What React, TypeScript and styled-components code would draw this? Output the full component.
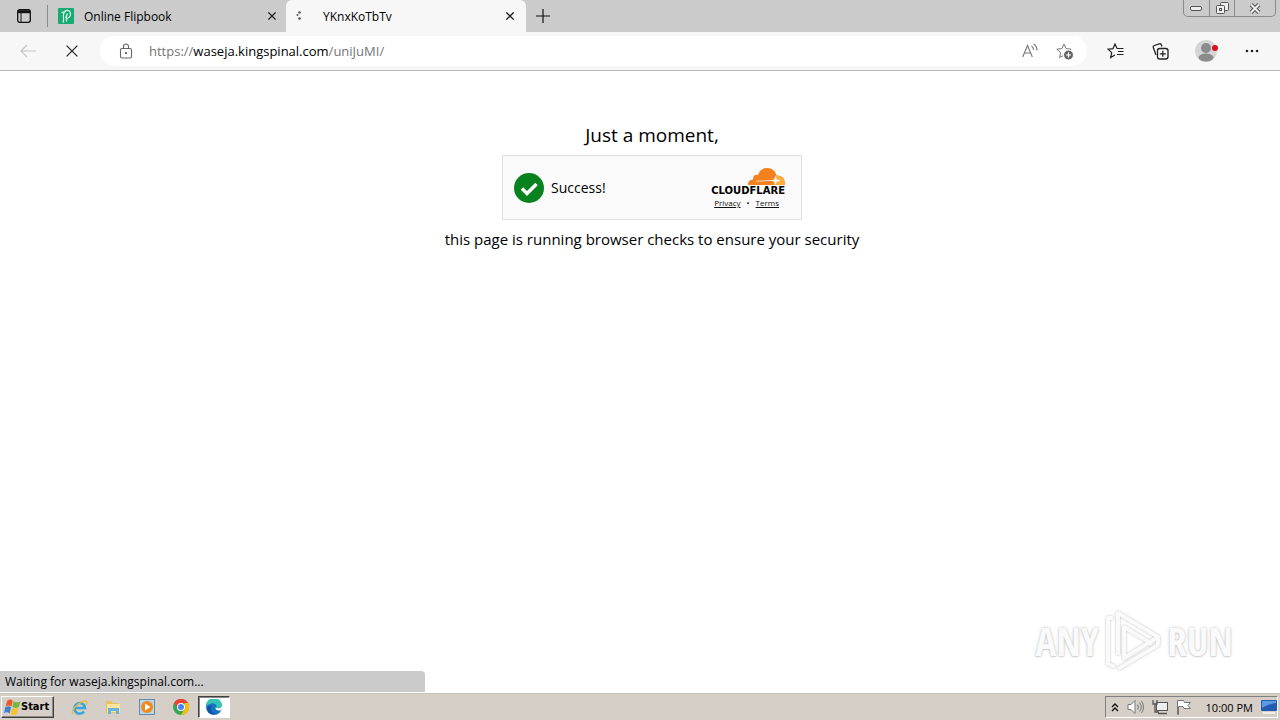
import React from 'react';
import styled, { createGlobalStyle } from 'styled-components';

const Global = createGlobalStyle`
  * { box-sizing: border-box; }
  body { margin: 0; background: #fff; color: #000; font-family: "Open Sans", "Noto Sans", sans-serif; }
  button { font: inherit; color: inherit; background: none; border: 0; padding: 0; margin: 0; }
  svg { display: block; flex: none; }
`;

const Screen = styled.div`
  min-height: 100vh;
  display: flex;
  flex-direction: column;
`;

const TabStrip = styled.header`
  display: flex;
  height: 32px;
  background: #cbcbcb;
`;

const IconButton = styled.button<{ $w?: number }>`
  display: flex;
  align-items: center;
  justify-content: center;
  width: ${(p) => p.$w ?? 32}px;
  height: 32px;
  flex: none;
`;

const Tab = styled.div<{ $active?: boolean }>`
  display: flex;
  align-items: center;
  width: ${(p) => (p.$active ? 240 : 239)}px;
  padding: 0 0 0 10px;
  font-size: 12px;
  background: ${(p) => (p.$active ? '#f7f7f7' : 'transparent')};
  border-radius: ${(p) => (p.$active ? '6px 6px 0 0' : '0')};
  border-left: ${(p) => (p.$active ? '0' : '1px solid #8a8a8a')};
  border-image: linear-gradient(#0000 6px, #8a8a8a 6px 26px, #0000 26px) 1;
  border-image-width: ${(p) => (p.$active ? 0 : '0 0 0 1px')};
`;

const TabTitle = styled.span<{ $gap: number }>`
  flex: 1;
  margin-left: ${(p) => p.$gap}px;
  white-space: nowrap;
`;

const WindowControls = styled.div`
  display: flex;
  margin: 0 4px 0 auto;
  height: 17px;
  border: 1px solid #8a8a8a;
  border-top: 0;
  border-radius: 0 0 5px 5px;
`;

const WindowButton = styled.button<{ $w: number }>`
  display: flex;
  align-items: center;
  justify-content: center;
  width: ${(p) => p.$w}px;
  & + & { border-left: 1px solid #8a8a8a; }
`;

const Toolbar = styled.nav`
  display: flex;
  align-items: center;
  height: 39px;
  padding: 0 12px;
  background: #f7f7f7;
  border-bottom: 1px solid #b9b9b9;
`;

const AddressBar = styled.div`
  display: flex;
  align-items: center;
  flex: 1;
  height: 30px;
  margin: 0 12px 0 0;
  padding: 0 5px 0 18px;
  border-radius: 15px;
  background: #fff;
`;

const Address = styled.div`
  flex: 1;
  margin-left: 15px;
  font-size: 13px;
  color: #757575;
  b { font-weight: 400; color: #000; }
`;

const Actions = styled.div`
  display: flex;
  gap: 13px;
`;

const Content = styled.main`
  position: relative;
  flex: 1;
  display: flex;
  flex-direction: column;
  align-items: center;
  padding: 52px 0 0 24px;
`;

const Heading = styled.h1`
  margin: 0;
  font-size: 19px;
  line-height: 24px;
  font-weight: 400;
`;

const Widget = styled.section`
  display: flex;
  align-items: center;
  width: 300px;
  height: 65px;
  margin: 8px 0;
  padding: 0 16px 0 11px;
  background: #fafafa;
  border: 1px solid #e0e0e0;
`;

const Success = styled.span`
  flex: 1;
  margin-left: 7px;
  font-size: 14px;
`;

const Brand = styled.div`
  display: flex;
  flex-direction: column;
  align-items: flex-end;
  padding-top: 2px;
`;

const BrandName = styled.span`
  font: bold 10px/12px "DejaVu Sans", sans-serif;
`;

const BrandLinks = styled.div`
  display: flex;
  align-items: center;
  gap: 6px;
  margin-right: 6px;
  font-size: 8px;
  line-height: 12px;
  a { color: #111; }
`;

const Note = styled.p`
  margin: 0;
  font-size: 15px;
  line-height: 22px;
`;

const StatusBubble = styled.div`
  position: absolute;
  left: 0;
  bottom: 1px;
  width: 425px;
  max-width: 100%;
  height: 21px;
  padding-left: 5px;
  font-size: 12px;
  line-height: 21px;
  background: #cbcbcb;
  border-radius: 0 4px 0 0;
`;

const Watermark = styled.div`
  position: absolute;
  right: 47px;
  bottom: 20px;
  display: flex;
  align-items: center;
  gap: 5px;
  font: 39px/60px "Open Sans Condensed", Roboto, sans-serif;
  color: #fafafa;
  text-shadow: 0 0 3px #bbb, 0 1px 1px #ddd;
  svg { filter: drop-shadow(0 0 1px #bbb); }
`;

const Taskbar = styled.footer`
  display: flex;
  align-items: center;
  height: 27px;
  background: #d6cfc7;
  border-top: 1px solid #c5c1b9;
`;

const StartButton = styled.button`
  display: flex;
  align-items: center;
  gap: 0;
  height: 22px;
  width: 53px;
  margin: 0 8px 0 1px;
  padding-left: 2px;
  font: bold 11px/20px "DejaVu Sans Condensed", "DejaVu Sans", sans-serif;
  border: 1px solid;
  border-color: #fff #404040 #404040 #fff;
  box-shadow: inset -1px -1px #8c8880;
`;

const TaskButton = styled.button<{ $pressed?: boolean }>`
  display: flex;
  align-items: center;
  justify-content: center;
  width: ${(p) => (p.$pressed ? 32 : 34)}px;
  height: 22px;
  background: ${(p) => (p.$pressed ? '#fff' : 'transparent')};
  border: ${(p) => (p.$pressed ? '1px solid' : '0')};
  border-color: #404040 #fff #fff #404040;
  box-shadow: ${(p) => (p.$pressed ? 'inset 1px 1px #888' : 'none')};
`;

const Tray = styled.div`
  display: flex;
  align-items: center;
  gap: 8px;
  height: 22px;
  margin: 0 2px 0 auto;
  padding: 0 0 0 5px;
  border: 1px solid;
  border-color: #808080 #fff #fff #808080;
`;

const Clock = styled.time`
  margin: 0 0 0 6px;
  font-size: 11px;
  white-space: nowrap;
`;

const Close = ({ size = 8, stroke = 1.6 }: { size?: number; stroke?: number }) => (
  <svg width={size} height={size} viewBox="0 0 10 10" stroke="#222" strokeWidth={stroke} fill="none">
    <path d="M.5.5l9 9M9.5.5l-9 9" />
  </svg>
);

const star = 'M8 1l2.1 4.6 5 .6-3.7 3.4 1 5L8 12.1l-4.4 2.5 1-5L.9 6.2l5-.6z';

export default function App() {
  return (
    <Screen>
      <Global />
      <TabStrip>
        <IconButton $w={47} aria-label="Tab actions">
          <svg width="14" height="14" viewBox="0 0 14 14" fill="none" stroke="#111">
            <rect x=".7" y=".7" width="12.6" height="12.6" rx="2" strokeWidth="1.3" />
            <path d="M1 2.700h12" strokeWidth="3" /><path d="M4 4v9" />
          </svg>
        </IconButton>
        <Tab>
          <svg width="16" height="16" viewBox="0 0 16 16" fill="none">
            <rect width="16" height="16" rx="1" fill="#18ab72" />
            <path d="M5 14.500C6.500 12 5 9 5.500 6.500 6 3.500 8 2.200 10 2.500c2.500.5 3 3.500 2 5.500-.8 1.500-2.200 2.500-3.500 2.500v3M8.500 10.500C7.500 9 8.500 7 9.500 5.500M3.500 4.500L6 4" stroke="#e6fff4" strokeWidth="1.200" />
          </svg>
          <TabTitle $gap={10}>Online Flipbook</TabTitle>
          <IconButton $w={29} aria-label="Close Online Flipbook"><Close /></IconButton>
        </Tab>
        <Tab $active>
          <svg width="6" height="10" viewBox="0 0 6 10" fill="#555">
            <circle cx="3.500" cy="1.500" r="1.300" /><circle cx="1.500" cy="4" r="1" /><circle cx="3.500" cy="7.500" r="1.300" />
          </svg>
          <TabTitle $gap={21}>YKnxKoTbTv</TabTitle>
          <IconButton aria-label="Close YKnxKoTbTv"><Close /></IconButton>
        </Tab>
        <IconButton $w={34} aria-label="New tab">
          <svg width="14" height="14" viewBox="0 0 14 14" stroke="#111" strokeWidth="1.200"><path d="M7 0v14M0 7h14" /></svg>
        </IconButton>
        <WindowControls>
          <WindowButton $w={25} aria-label="Minimize">
            <svg width="13" height="5" viewBox="0 0 13 5"><rect x=".5" y=".5" width="11" height="4" rx="1.500" fill="#eee" stroke="#555" /></svg>
          </WindowButton>
          <WindowButton $w={25} aria-label="Restore">
            <svg width="13" height="12" viewBox="0 0 13 12" fill="#eee" stroke="#555">
              <rect x="4.500" y=".5" width="8" height="8" rx="1" /><rect x=".5" y="3.500" width="8" height="8" rx="1" /><rect x="3.500" y="6.500" width="2" height="2" />
            </svg>
          </WindowButton>
          <WindowButton $w={41} aria-label="Close">
            <svg width="12" height="11" viewBox="0 0 12 11" fill="none">
              <path d="M2 1.500l8 8M10 1.500l-8 8" stroke="#555" strokeWidth="4" /><path d="M2 1.500l8 8M10 1.500l-8 8" stroke="#eee" strokeWidth="2" />
            </svg>
          </WindowButton>
        </WindowControls>
      </TabStrip>
      <Toolbar>
        <IconButton aria-label="Back">
          <svg width="16" height="14" viewBox="0 0 16 14" fill="none" stroke="#c4c4c4" strokeWidth="1.200"><path d="M7 1L1 7l6 6M1 7h15" /></svg>
        </IconButton>
        <IconButton $w={56} aria-label="Stop loading"><Close size={12} stroke={1} /></IconButton>
        <AddressBar>
          <svg width="16" height="16" viewBox="0 0 16 16" fill="none" stroke="#666" strokeWidth="1.100">
            <rect x="2.500" y="5.500" width="11" height="9.500" rx="1.500" /><path d="M5.500 5.500V3.500a2.500 2.500 0 015 0v2" /><circle cx="8" cy="10.200" r=".6" fill="#666" />
          </svg>
          <Address>https://<b>waseja.kingspinal.com</b>/uniJuMI/</Address>
          <IconButton $w={36} aria-label="Read aloud">
            <svg width="16" height="16" viewBox="0 0 16 16" fill="none" stroke="#777" strokeWidth="1.100">
              <path d="M.7 14L5.500 2.500 10.300 14M2.400 10h6.200M9.500 3q2 1.200 2 4M11.500 1q3.500 2 3.500 6.500" />
            </svg>
          </IconButton>
          <IconButton $w={34} aria-label="Add to favorites">
            <svg width="18" height="17" viewBox="0 0 18 17" fill="none" stroke="#777">
              <path d={star} /><circle cx="12.500" cy="12" r="5" fill="#666" stroke="#fff" /><path d="M12.500 9.500v5M10 12h5" stroke="#fff" strokeWidth="1.200" />
            </svg>
          </IconButton>
        </AddressBar>
        <Actions>
          <IconButton aria-label="Favorites">
            <svg width="17" height="16" viewBox="0 0 17 16" fill="none" stroke="#222" strokeWidth="1.200">
              <path d="M10 5.500L8 1 6 5.600l-5 .6 3.700 3.400-1 5L8 12.100M10 5.500h6.500M11 8.500h5.500M10 11.500h6.500" />
            </svg>
          </IconButton>
          <IconButton aria-label="Collections">
            <svg width="17" height="17" viewBox="0 0 17 17" fill="none" stroke="#222" strokeWidth="1.300">
              <path d="M4 12L1.300 4.500q-.4-1.400 1-2l5-1.700q1.400-.4 2 1l.7 1.700" /><rect x="5.500" y="5.500" width="10.500" height="10.500" rx="2.200" /><path d="M10.800 7.800v6M7.800 10.800h6" />
            </svg>
          </IconButton>
          <IconButton $w={34} aria-label="Profile">
            <svg width="24" height="22" viewBox="0 0 24 22">
              <circle cx="12" cy="11" r="11" fill="#d5d5d5" /><circle cx="12" cy="8" r="5" fill="#8b8b8b" /><ellipse cx="12" cy="17.500" rx="7.500" ry="4" fill="#8b8b8b" /><circle cx="21" cy="8" r="3" fill="#d8101c" />
            </svg>
          </IconButton>
          <IconButton aria-label="Settings">
            <svg width="14" height="4" viewBox="0 0 14 4" fill="#222"><circle cx="2" cy="2" r="1.300" /><circle cx="7" cy="2" r="1.300" /><circle cx="12" cy="2" r="1.300" /></svg>
          </IconButton>
        </Actions>
      </Toolbar>
      <Content>
        <Heading>Just a moment,</Heading>
        <Widget>
          <svg width="30" height="30" viewBox="0 0 30 30"><circle cx="15" cy="15" r="15" fill="#07821f" /><path d="M8 15.500l5 5 9.500-9.500" fill="none" stroke="#fff" strokeWidth="3.500" /></svg>
          <Success>Success!</Success>
          <Brand>
            <svg width="37" height="17" viewBox="0 0 37 17">
              <path d="M0 17q-.5-5 5-5.500Q5 6 10 7 12 0 19 0q8 0 9.500 7.500Q36 7 37 14.500V17z" fill="#f48120" />
              <path d="M28 8q6-1 8 4 1 2 1 5H25z" fill="#faad3f" />
              <path d="M8 13.300l18-1M27.500 8.500l.8 3.200 3.700.9-3.700.9-.8 2.800-.8-2.800-2.700-.9 2.700-.9z" stroke="#fff" strokeWidth=".7" fill="#fff" />
            </svg>
            <BrandName>CLOUDFLARE</BrandName>
            <BrandLinks><a href="#privacy">Privacy</a><span>•</span><a href="#terms">Terms</a></BrandLinks>
          </Brand>
        </Widget>
        <Note>this page is running browser checks to ensure your security</Note>
        <StatusBubble>Waiting for waseja.kingspinal.com...</StatusBubble>
        <Watermark>
          <span>ANY</span>
          <svg width="58" height="64" viewBox="0 0 58 64" fill="none" stroke="#fafafa" strokeWidth="4" strokeLinejoin="round">
            <path d="M14 46V4l40 24-34 21V18l28 17" /><path d="M9 9H4v46l7 3M14 60l40-24v-8" />
          </svg>
          <span>RUN</span>
        </Watermark>
      </Content>
      <Taskbar>
        <StartButton>
          <svg width="17" height="16" viewBox="0 0 16 15">
            <path d="M3 1.500q3-2 5.300 0L7 7Q4 5 1.500 7z" fill="#ed5a29" /><path d="M9 2q3 2 6.500 0L14 7.500q-3 2-6 0z" fill="#76b83f" />
            <path d="M1.200 7.800q3-2 5.500 0l-1.400 5.700q-3-2-5.300 0z" fill="#3d83d3" /><path d="M7.700 8.300q3 2 6 0l-1.500 5.700q-3 2-6 0z" fill="#f7c42b" />
          </svg>
          Start
        </StartButton>
        <TaskButton aria-label="Internet Explorer">
          <svg width="17" height="17" viewBox="0 0 17 17" fill="none">
            <path d="M4 9h10a5.300 5.300 0 10-1 3.500" stroke="#39a5df" strokeWidth="2.600" /><path d="M2 15C-1 12 8 2 15 2q2 1 .3 4" stroke="#e9bd36" strokeWidth="1.300" />
          </svg>
        </TaskButton>
        <TaskButton aria-label="Explorer">
          <svg width="16" height="16" viewBox="0 0 16 16">
            <path d="M1 2h5l1 2h7v10H1z" fill="#e9c45c" /><path d="M2 5h13v8H2z" fill="#f8e49b" /><path d="M3 15V9h11v6h-3v-3H6v3z" fill="#66b3df" />
          </svg>
        </TaskButton>
        <TaskButton aria-label="Media Player">
          <svg width="16" height="16" viewBox="0 0 16 16"><rect x=".5" y=".5" width="15" height="15" fill="#b7d5ed" stroke="#618db0" /><circle cx="8" cy="8" r="6" fill="#f18a1b" /><path d="M6 4.500L11.500 8 6 11.500z" fill="#fff" /></svg>
        </TaskButton>
        <TaskButton aria-label="Chrome">
          <svg width="16" height="16" viewBox="0 0 16 16">
            <circle cx="8" cy="8" r="8" fill="#34a853" /><path d="M1 4a8 8 0 0114 0H8L5 10z" fill="#ea4335" /><path d="M15 4a8 8 0 01-7 12l3.500-6V4z" fill="#fbbc05" />
            <circle cx="8" cy="8" r="4" fill="#fff" /><circle cx="8" cy="8" r="3" fill="#4285f4" />
          </svg>
        </TaskButton>
        <TaskButton $pressed aria-label="Edge">
          <svg width="16" height="16" viewBox="0 0 16 16">
            <circle cx="8" cy="8" r="8" fill="#1674c5" /><path d="M0 7a8 8 0 0116 0c0 4-5 4-6 2 2-3-2-6-6-4Q1 6 0 7z" fill="#35c5b6" /><path d="M9.500 8.500Q9 12 14.500 11.500L16 10V7q-1 4-6.500 1.500z" fill="#fff" /><path d="M6 7q-4 4 3 8-7 1-8-5 1-4 5-3z" fill="#1550a0" />
          </svg>
        </TaskButton>
        <Tray>
          <svg width="8" height="9" viewBox="0 0 8 9" fill="none" stroke="#111" strokeWidth="1.400"><path d="M1 4l3-3 3 3M1 8l3-3 3 3" /></svg>
          <svg width="17" height="16" viewBox="0 0 17 16" fill="none" stroke="#777"><path d="M1 5.500h3L8 1.500v13l-4-4H1z" fill="#fff" /><path d="M10.500 5.500q2 2.500 0 5M12.500 3.500q3.500 4.500 0 9M14.500 2q4 6 0 12" /></svg>
          <svg width="16" height="16" viewBox="0 0 16 16" fill="#eee" stroke="#555"><rect x="4.500" y="3.500" width="11" height="8" /><path d="M6 14.500h9M1 1v4h4V1M3 5v8h4" fill="none" strokeWidth="1.300" /></svg>
          <svg width="16" height="16" viewBox="0 0 16 16" fill="#fff" stroke="#777"><path d="M1.500 15.500v-14h6l1 2h6l-2.500 3 2.500 3H8l-1-2H2.500v8z" /></svg>
          <Clock>10:00 PM</Clock>
          <svg width="16" height="14" viewBox="0 0 16 14"><rect width="16" height="11" rx="1" fill="#245ab0" /><path d="M1 1h14v2Q7 4 1 8z" fill="#5d9ade" /><path d="M2 13h12" stroke="#eee" strokeWidth="2" /></svg>
        </Tray>
      </Taskbar>
    </Screen>
  );
}
